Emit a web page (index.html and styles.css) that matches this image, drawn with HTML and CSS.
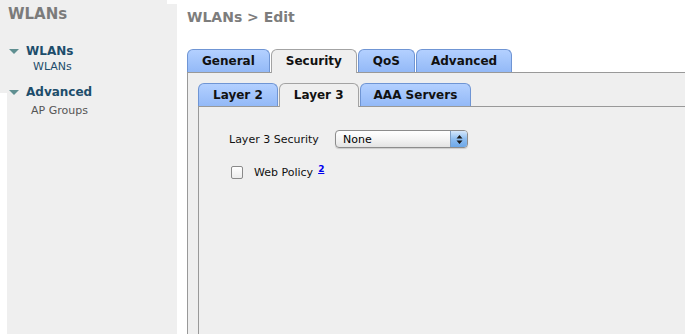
FILE: index.html
```html
<!DOCTYPE html>
<html>
<head>
<meta charset="utf-8">
<title>WLANs &gt; Edit</title>
<link rel="stylesheet" href="styles.css">
</head>
<body>
<aside class="sidebar">
  <div class="side-title">WLANs</div>
  <div class="group">
    <div class="group-head"><span class="tri"></span>WLANs</div>
    <div class="group-item sub-blue">WLANs</div>
  </div>
  <div class="group group-2">
    <div class="group-head"><span class="tri"></span>Advanced</div>
    <div class="group-item sub-gray">AP Groups</div>
  </div>
</aside>
<main class="main">
  <h1 class="page-title">WLANs &gt; Edit</h1>
  <div class="tabs">
    <div class="tab">General</div>
    <div class="tab active">Security</div>
    <div class="tab">QoS</div>
    <div class="tab">Advanced</div>
  </div>
  <div class="panel outer">
    <div class="tabs">
      <div class="tab">Layer 2</div>
      <div class="tab active">Layer 3</div>
      <div class="tab tab-aaa">AAA Servers</div>
    </div>
    <div class="panel inner">
      <div class="row row-sec">
        <span class="label">Layer 3 Security</span>
        <div class="select">
          <span class="select-value">None</span>
          <span class="stepper">
            <svg width="7" height="11" viewBox="0 0 7 11"><path d="M3.5 1 L6.5 4.5 L0.5 4.5 Z M3.5 10 L6.5 6.5 L0.5 6.5 Z" fill="#1a1a1a"/></svg>
          </span>
        </div>
      </div>
      <div class="row row-web">
        <span class="checkbox"></span>
        <span class="label">Web Policy</span>
        <a class="footnote" href="#">2</a>
      </div>
    </div>
  </div>
</main>
</body>
</html>
```

FILE: styles.css
```css
html, body {
  margin: 0;
  padding: 0;
  background: #ffffff;
}
body {
  display: flex;
  width: 685px;
  height: 334px;
  overflow: hidden;
  font-family: "DejaVu Sans", Verdana, sans-serif;
}
.sidebar {
  width: 177px;
  flex: 0 0 177px;
  height: 334px;
  background:
    linear-gradient(#ffffff, #ffffff) 0 93px / 7px 100% no-repeat,
    linear-gradient(#ffffff, #ffffff) 167px 0 / 10px 4px no-repeat,
    #efefef;
}
.side-title {
  padding: 5px 0 0 8px;
  font-size: 15px;
  line-height: 18px;
  font-weight: bold;
  color: #7b7b7b;
}
.group {
  margin-top: 20px;
}
.group-2 {
  margin-top: 10px;
}
.group-head {
  display: flex;
  align-items: center;
  padding-left: 9px;
  font-size: 12px;
  line-height: 16px;
  font-weight: bold;
  color: #1d4d6b;
}
.tri {
  width: 0;
  height: 0;
  border-left: 5.5px solid transparent;
  border-right: 5.5px solid transparent;
  border-top: 5px solid #5f8f91;
  margin-right: 7px;
  margin-top: 1px;
}
.group-item {
  font-size: 11px;
  line-height: 14px;
}
.sub-blue {
  margin-top: 1px;
  padding-left: 33px;
  color: #1d4d6b;
}
.sub-gray {
  margin-top: 4px;
  padding-left: 31px;
  color: #555555;
}
.main {
  margin-left: 10px;
  width: 498px;
  flex: 0 0 498px;
  height: 334px;
  display: flex;
  flex-direction: column;
}
.page-title {
  margin: 0;
  padding-top: 8px;
  font-size: 14px;
  line-height: 18px;
  font-weight: bold;
  color: #7d7d7d;
}
.tabs {
  display: flex;
  gap: 1px;
  align-items: flex-end;
}
.main > .tabs {
  margin-top: 23px;
}
.tab {
  position: relative;
  z-index: 1;
  height: 22px;
  padding: 0 14px;
  font-size: 12px;
  line-height: 22px;
  font-weight: bold;
  color: #111111;
  border: 1px solid #6f95d4;
  border-bottom: none;
  border-radius: 6px 6px 0 0;
  background: linear-gradient(#b3d0ff, #93b9f7);
}
.tab-aaa {
  padding: 0 13px;
}
.tab.active {
  background: #efefef;
  border-color: #a3a3a3;
  height: 23px;
  margin-bottom: -1px;
}
.panel {
  background: #efefef;
  border-top: 1px solid #999999;
  border-left: 1px solid #999999;
}
.outer {
  flex: 1;
  min-height: 0;
  padding: 10px 0 0 10px;
  display: flex;
  flex-direction: column;
}
.inner {
  flex: 1;
  min-height: 0;
  padding: 23px 0 0 30px;
}
.row {
  display: flex;
  align-items: center;
  font-size: 11px;
  color: #111111;
}
.row-sec {
  height: 18px;
}
.row-sec .label {
  width: 106px;
}
.select {
  box-sizing: border-box;
  width: 133px;
  height: 18px;
  display: flex;
  align-items: center;
  border: 1px solid #8c8c8c;
  border-radius: 4px;
  background: linear-gradient(#ffffff, #f4f4f4 50%, #e3e3e3);
  box-shadow: 0 1px 1px rgba(0,0,0,0.15);
  overflow: hidden;
}
.select-value {
  flex: 1;
  padding-left: 7px;
  font-size: 11px;
  color: #000000;
}
.stepper {
  width: 16px;
  height: 16px;
  display: flex;
  align-items: center;
  justify-content: center;
  background: linear-gradient(#d6e8fb, #8dbdf0 50%, #6ea8e8);
  border-left: 1px solid #7d9ec4;
}
.row-web {
  margin-top: 17px;
  height: 14px;
}
.checkbox {
  box-sizing: border-box;
  width: 12px;
  height: 13px;
  margin-left: 2px;
  margin-right: 11px;
  border: 1px solid #8a8a8a;
  border-radius: 2px;
  background: linear-gradient(#ffffff, #ececec);
}
.footnote {
  align-self: flex-start;
  margin-left: 5px;
  font-size: 9px;
  line-height: 9px;
  font-weight: bold;
  color: #0000ee;
  text-decoration: underline;
}
```
